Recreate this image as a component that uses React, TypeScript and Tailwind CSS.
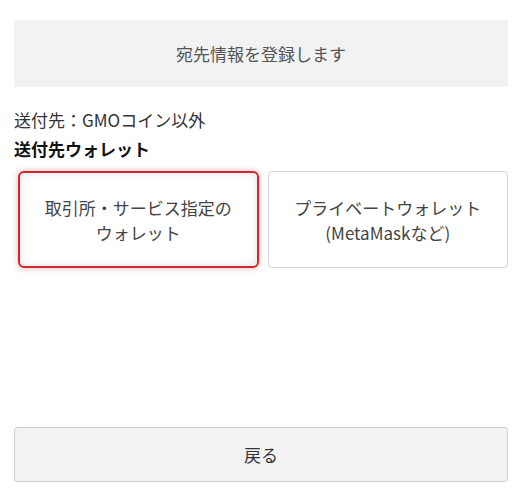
export default function App() {
  return (
    <div
      className="w-[529px] h-[488px] bg-white flex flex-col pl-[14px] pr-[21px] pt-[20px] text-[#333]"
      style={{ fontFamily: '"Noto Sans CJK JP", "Noto Sans", sans-serif' }}
    >
      {/* Header */}
      <div className="h-[67px] bg-[#f2f2f2] flex items-center justify-center text-[17px] text-[#555]">
        宛先情報を登録します
      </div>

      <p className="mt-[20px] text-[17px] leading-[25px]">送付先：GMOコイン以外</p>
      <p className="mt-[4px] text-[17px] leading-[25px] font-bold text-[#111]">送付先ウォレット</p>

      {/* Wallet choice */}
      <div className="mt-[10px] grid grid-cols-2 gap-[9px] pl-[4px]">
        <button
          type="button"
          className="h-[97px] rounded-[6px] border-2 border-[#d3282e] bg-white shadow-[0_0_6px_rgba(210,40,46,0.35),inset_0_0_8px_rgba(0,0,0,0.12)] flex flex-col items-center justify-center text-[17px] leading-[25px] text-[#444]"
        >
          <span>取引所・サービス指定の</span>
          <span>ウォレット</span>
        </button>
        <button
          type="button"
          className="h-[97px] rounded-[4px] border border-[#d6d6d6] bg-white flex flex-col items-center justify-center text-[17px] leading-[25px] text-[#444]"
        >
          <span>プライベートウォレット</span>
          <span>(MetaMaskなど)</span>
        </button>
      </div>

      {/* Back */}
      <button
        type="button"
        className="mt-[159px] h-[55px] rounded-[3px] border border-[#cfcfcf] bg-[#f2f2f2] flex items-center justify-center text-[17px] text-[#333]"
      >
        戻る
      </button>
    </div>
  );
}
